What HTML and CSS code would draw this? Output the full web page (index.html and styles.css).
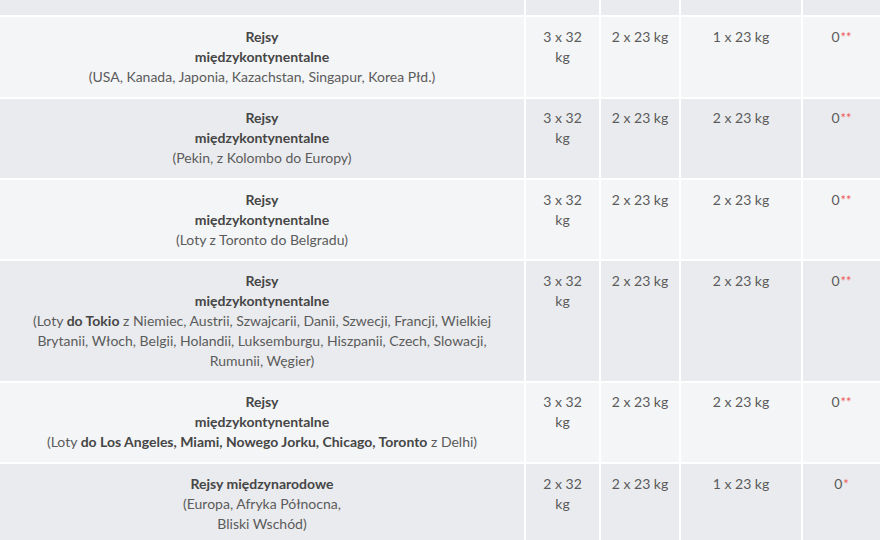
FILE: index.html
```html
<!DOCTYPE html>
<html lang="pl">
<head>
<meta charset="utf-8">
<title>Bagaż</title>
<link rel="stylesheet" href="styles.css">
</head>
<body>
<table class="bag">
  <colgroup>
    <col class="c1"><col class="c2"><col class="c3"><col class="c4"><col class="c5">
  </colgroup>
  <thead>
    <tr>
      <th>Trasa</th>
      <th>Klasa<br>First,</th>
      <th>Klasa<br>Business,</th>
      <th>Klasa<br>Economy,</th>
      <th>Klasa<br>Lite</th>
    </tr>
  </thead>
  <tbody>
    <tr>
      <td><b>Rejsy<br>międzykontynentalne</b><br>(USA, Kanada, Japonia, Kazachstan, Singapur, Korea Płd.)</td>
      <td>3 x 32 kg</td>
      <td>2 x 23 kg</td>
      <td>1 x 23 kg</td>
      <td>0<span class="star">**</span></td>
    </tr>
    <tr>
      <td><b>Rejsy<br>międzykontynentalne</b><br>(Pekin, z Kolombo do Europy)</td>
      <td>3 x 32 kg</td>
      <td>2 x 23 kg</td>
      <td>2 x 23 kg</td>
      <td>0<span class="star">**</span></td>
    </tr>
    <tr>
      <td><b>Rejsy<br>międzykontynentalne</b><br>(Loty z Toronto do Belgradu)</td>
      <td>3 x 32 kg</td>
      <td>2 x 23 kg</td>
      <td>2 x 23 kg</td>
      <td>0<span class="star">**</span></td>
    </tr>
    <tr>
      <td><b>Rejsy<br>międzykontynentalne</b><br>(Loty <b>do Tokio</b> z Niemiec, Austrii, Szwajcarii, Danii, Szwecji, Francji, Wielkiej Brytanii, Włoch, Belgii, Holandii, Luksemburgu, Hiszpanii, Czech, Slowacji, Rumunii, Węgier)</td>
      <td>3 x 32 kg</td>
      <td>2 x 23 kg</td>
      <td>2 x 23 kg</td>
      <td>0<span class="star">**</span></td>
    </tr>
    <tr>
      <td><b>Rejsy<br>międzykontynentalne</b><br>(Loty <b>do Los Angeles, Miami, Nowego Jorku, Chicago, Toronto</b> z Delhi)</td>
      <td>3 x 32 kg</td>
      <td>2 x 23 kg</td>
      <td>2 x 23 kg</td>
      <td>0<span class="star">**</span></td>
    </tr>
    <tr>
      <td><b>Rejsy międzynarodowe</b><br>(Europa, Afryka Północna,<br>Bliski Wschód)</td>
      <td>2 x 32 kg</td>
      <td>2 x 23 kg</td>
      <td>1 x 23 kg</td>
      <td>0<span class="star">*</span></td>
    </tr>
  </tbody>
</table>
</body>
</html>
```
FILE: styles.css
```css
html, body {
  margin: 0;
  padding: 0;
  background: #ffffff;
}
body {
  font-family: Lato, "Open Sans", sans-serif;
  font-size: 14px;
  line-height: 20px;
  color: #5b5b5b;
  overflow: hidden;
}
.bag {
  width: 880px;
  table-layout: fixed;
  border-collapse: separate;
  border-spacing: 0;
  margin-top: -49.2px;
}
.c1 { width: 526px; }
.c2 { width: 75px; }
.c3 { width: 80px; }
.c4 { width: 122px; }
.c5 { width: 77px; }
.bag th,
.bag td {
  box-sizing: border-box;
  padding: 9.7px 10px;
  text-align: center;
  vertical-align: top;
  border-right: 2px solid #ffffff;
  border-bottom: 2px solid #ffffff;
  font-weight: normal;
}
.bag th:last-child,
.bag td:last-child {
  border-right: 0;
}
.bag thead th {
  background: #eaebee;
  vertical-align: bottom;
  padding-bottom: 14.7px;
  color: #555;
}
.bag tbody tr:nth-child(odd) td {
  background: #f4f5f7;
}
.bag tbody tr:nth-child(even) td {
  background: #eaebee;
}
.bag b {
  font-weight: 700;
  color: #464646;
}
.star {
  color: #f0595a;
  font-size: 13px;
  margin-left: 1px;
}
```
